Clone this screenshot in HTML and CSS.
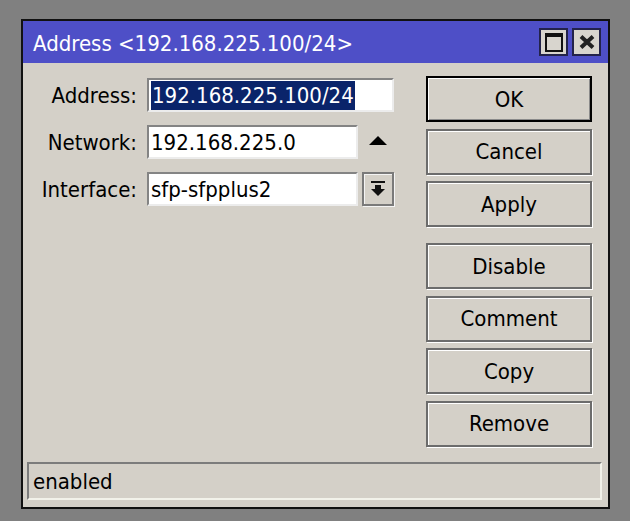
FILE: index.html
```html
<!DOCTYPE html>
<html>
<head>
<meta charset="utf-8">
<link rel="stylesheet" href="styles.css">
</head>
<body>
<div class="window">
  <div class="titlebar">
    <span class="title">Address &lt;192.168.225.100/24&gt;</span>
    <div class="tb-btns">
      <div class="tb-btn"><svg width="18" height="19" viewBox="0 0 18 19"><path d="M0 0h18v19H0z M2 4h14v13H2z" fill="#111" fill-rule="evenodd"/></svg></div>
      <div class="tb-btn"><svg width="16" height="14" viewBox="0 0 16 14"><path d="M2 1.5L14 12.5M14 1.5L2 12.5" stroke="#222" stroke-width="4" fill="none"/></svg></div>
    </div>
  </div>
  <div class="content">
    <div class="main">
      <div class="form">
        <div class="row">
          <span class="lbl">Address:</span>
          <div class="field wide"><span class="sel">192.168.225.100/24</span></div>
        </div>
        <div class="row">
          <span class="lbl">Network:</span>
          <div class="field">192.168.225.0</div>
          <div class="side"><svg width="18" height="9" viewBox="0 0 18 9"><polygon points="9,0 18,9 0,9" fill="#000"/></svg></div>
        </div>
        <div class="row">
          <span class="lbl">Interface:</span>
          <div class="field">sfp-sfpplus2</div>
          <div class="side dd"><svg width="14" height="16" viewBox="0 0 14 16"><rect x="0" y="0" width="14" height="2" fill="#111"/><rect x="4" y="4" width="6" height="4" fill="#111"/><polygon points="0,8 14,8 7,15" fill="#111"/></svg></div>
        </div>
      </div>
      <div class="buttons">
        <div class="group">
          <div class="btn default">OK</div>
          <div class="btn">Cancel</div>
          <div class="btn">Apply</div>
        </div>
        <div class="group">
          <div class="btn">Disable</div>
          <div class="btn">Comment</div>
          <div class="btn">Copy</div>
          <div class="btn">Remove</div>
        </div>
      </div>
    </div>
    <div class="status">enabled</div>
  </div>
</div>
</body>
</html>
```

FILE: styles.css
```css
html, body {
  margin: 0;
  padding: 0;
  background: #808080;
}
body {
  font-family: "DejaVu Sans Condensed", "DejaVu Sans", sans-serif;
  font-stretch: condensed;
  font-size: 22px;
  color: #000;
}
.window {
  margin: 19px 0 0 21px;
  width: 589px;
  height: 490px;
  box-sizing: border-box;
  border: 2px solid #111;
  background: #d4d0c8;
  display: flex;
  flex-direction: column;
}
.titlebar {
  height: 42px;
  flex: none;
  background: #4e4fc7;
  display: flex;
  align-items: center;
  padding: 0 7px 0 10px;
}
.title {
  color: #fff;
  flex: 1;
  white-space: nowrap;
  padding-top: 3px;
}
.tb-btns {
  display: flex;
  gap: 4px;
}
.tb-btn {
  width: 29px;
  height: 28px;
  box-sizing: border-box;
  border: 2px solid #23234a;
  background: #d8d5ce;
  display: flex;
  align-items: center;
  justify-content: center;
}
.content {
  flex: 1;
  display: flex;
  flex-direction: column;
}
.main {
  height: 399px;
  display: flex;
}
.form {
  padding-top: 15px;
  display: flex;
  flex-direction: column;
  gap: 13px;
}
.row {
  display: flex;
  align-items: center;
  height: 34px;
}
.lbl {
  width: 114px;
  margin-right: 10px;
  text-align: right;
  white-space: nowrap;
}
.field {
  width: 211px;
  height: 34px;
  box-sizing: border-box;
  background: #fff;
  border: 2px solid;
  border-color: #848484 #ececec #ececec #848484;
  padding-left: 2px;
  display: flex;
  align-items: center;
  white-space: nowrap;
}
.field.wide {
  width: 247px;
}
.sel {
  background: #0a246a;
  color: #fff;
  line-height: 29px;
  padding: 0 1px;
}
.side {
  width: 32px;
  height: 34px;
  box-sizing: border-box;
  margin-left: 4px;
  display: flex;
  align-items: center;
  justify-content: center;
  padding-bottom: 4px;
}
.side.dd {
  padding: 0;
  border: 2px solid #7a7a7a;
  box-shadow: inset 1px 1px 0 #f4f4f4, 1px 1px 0 #f4f4f4;
  background: #d4d0c8;
}
.buttons {
  margin-left: auto;
  margin-right: 16px;
  width: 166px;
  padding-top: 13px;
  display: flex;
  flex-direction: column;
  gap: 16px;
}
.group {
  display: flex;
  flex-direction: column;
  gap: 6.5px;
}
.btn {
  height: 46px;
  box-sizing: border-box;
  border: 2px solid #6c6c6c;
  box-shadow: inset 1px 1px 0 #fff, 1px 1px 0 #fff;
  display: flex;
  align-items: center;
  justify-content: center;
}
.btn.default {
  border: 2px solid #000;
  box-shadow: inset 1px 1px 0 #fff, inset -1px -1px 0 #8a8a8a;
}
.status {
  height: 38px;
  margin: 0 6px 7px 4px;
  box-sizing: border-box;
  border: 2px solid;
  border-color: #7c7c7c #f2f2ea #f2f2ea #7c7c7c;
  display: flex;
  align-items: center;
  padding-left: 4px;
}
```
